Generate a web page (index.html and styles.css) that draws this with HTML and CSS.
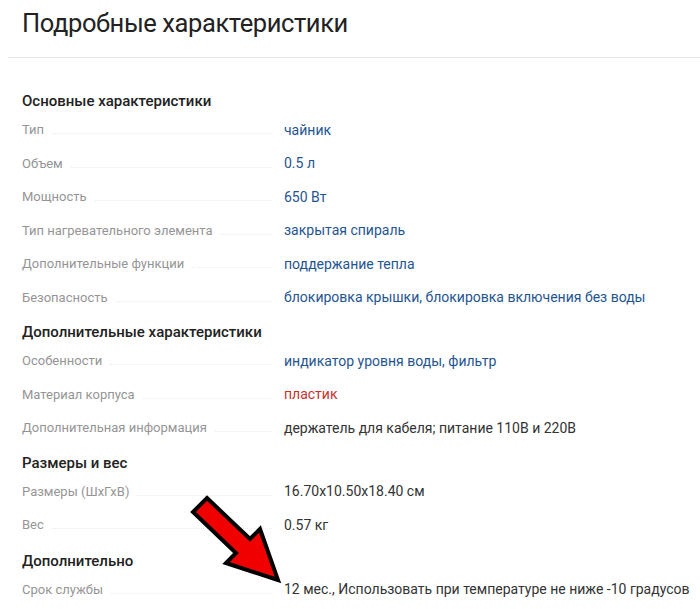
FILE: index.html
```html
<!DOCTYPE html>
<html>

<head>
    <meta charset="utf-8" />
    <title>Подробные характеристики</title>
    <link rel="stylesheet" href="styles.css">
</head>

<body>
    <div class="page">
        <h1 class="title">Подробные характеристики</h1>
        <hr class="divider">

        <div class="section">
            <h3>Основные характеристики</h3>
            <div class="row"><div class="name"><span>Тип</span><i></i></div><div class="value link">чайник</div></div>
            <div class="row"><div class="name"><span>Объем</span><i></i></div><div class="value link">0.5 л</div></div>
            <div class="row"><div class="name"><span>Мощность</span><i></i></div><div class="value link">650 Вт</div></div>
            <div class="row"><div class="name"><span>Тип нагревательного элемента</span><i></i></div><div class="value link">закрытая спираль</div></div>
            <div class="row"><div class="name"><span>Дополнительные функции</span><i></i></div><div class="value link">поддержание тепла</div></div>
            <div class="row"><div class="name"><span>Безопасность</span><i></i></div><div class="value link">блокировка крышки, блокировка включения без воды</div></div>
        </div>

        <div class="section">
            <h3>Дополнительные характеристики</h3>
            <div class="row"><div class="name"><span>Особенности</span><i></i></div><div class="value link">индикатор уровня воды, фильтр</div></div>
            <div class="row"><div class="name"><span>Материал корпуса</span><i></i></div><div class="value red">пластик</div></div>
            <div class="row"><div class="name"><span>Дополнительная информация</span><i></i></div><div class="value">держатель для кабеля; питание 110В и 220В</div></div>
        </div>

        <div class="section">
            <h3>Размеры и вес</h3>
            <div class="row"><div class="name"><span>Размеры (ШхГхВ)</span><i></i></div><div class="value">16.70x10.50x18.40 см</div></div>
            <div class="row"><div class="name"><span>Вес</span><i></i></div><div class="value">0.57 кг</div></div>
        </div>

        <div class="section">
            <h3>Дополнительно</h3>
            <div class="row"><div class="name"><span>Срок службы</span><i></i></div><div class="value">12 мес., Использовать при температуре не ниже -10 градусов</div></div>
        </div>
    </div>

    <!-- pointer arrow drawn over the page -->
    <svg class="arrow" width="700" height="609" viewBox="0 0 700 609">
        <polygon points="207,498 250,539 260,529 278,580 226,563 236,553 193,512"
            fill="#f00000" stroke="#000" stroke-width="4" stroke-linejoin="miter" />
    </svg>
</body>

</html>
```

FILE: styles.css
```css
body {
    margin: 0;
    background-color: #fff;
    font-family: Roboto, "Noto Sans", sans-serif;
    color: #333;
}

.page {
    padding: 1px 0 0 8px;
}

.title {
    margin: 0;
    padding: 4px 0 0 14px;
    font-size: 25.5px;
    font-weight: 400;
    line-height: 36px;
    letter-spacing: -0.4px;
    color: #222;
}

.divider {
    margin: 16px 0 0 0;
    border: 0;
    border-top: 1px solid #e8e8e8;
}

.section {
    padding-left: 14px;
    margin-top: 6px;
}

.section:first-of-type {
    margin-top: 31px;
}

.section:last-of-type {
    margin-top: 7px;
}

.section h3 {
    margin: 0;
    height: 24px;
    line-height: 24px;
    font-size: 15px;
    font-weight: 500;
    color: #222;
}

.row {
    display: flex;
    align-items: center;
    height: 33.5px;
}

.name {
    flex: none;
    display: flex;
    align-items: baseline;
    width: 250px;
    margin-right: 12px;
    font-size: 13px;
    color: #959595;
}

.name i {
    flex: 1;
    margin-left: 8px;
    border-bottom: 1px dotted #ececec;
}

.value {
    font-size: 14px;
    white-space: nowrap;
    color: #333;
}

.value.link {
    color: #1f5591;
}

.value.red {
    color: #c8322b;
}

.arrow {
    position: absolute;
    left: 0;
    top: 0;
}
```
